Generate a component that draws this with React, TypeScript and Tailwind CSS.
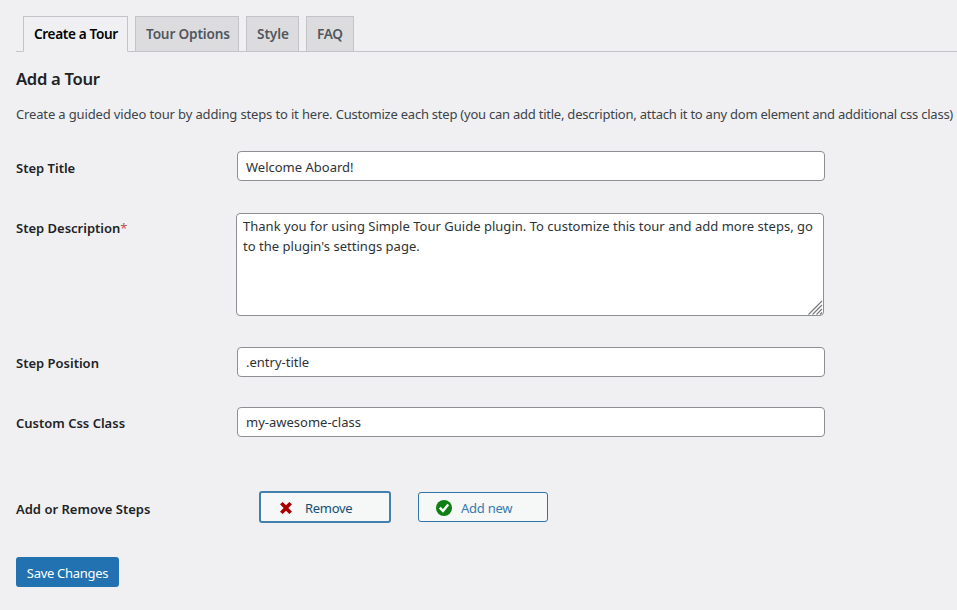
import React from "react";

const inputClass =
  "block h-[30px] w-[588px] rounded-[4px] border border-[#8c8f94] bg-white px-2 text-[13px] text-[#2c3338] outline-none";

function Tab({ label, active, className }: { label: string; active?: boolean; className: string }) {
  return (
    <a
      className={`box-border block h-[36px] whitespace-nowrap border border-[#c3c4c7] pl-[10px] pt-[5px] text-[13.6px] leading-6 font-semibold ${
        active ? "border-b-[#f0f0f2] bg-[#f0f0f2] text-black" : "bg-[#dcdcde] text-[#50575e]"
      } ${className}`}
    >
      {label}
    </a>
  );
}

function Label({ children, className = "" }: { children: React.ReactNode; className?: string }) {
  return (
    <label className={`block shrink-0 whitespace-nowrap text-[13px] leading-5 font-semibold text-[#1d2327] ${className}`}>
      {children}
    </label>
  );
}

export default function App() {
  return (
    <div className="h-[610px] w-[957px] overflow-hidden bg-[#f0f0f2] pt-4 font-['Noto_Sans','Open_Sans',sans-serif]">
      <nav className="ml-4 flex h-[36px] bg-[linear-gradient(#c3c4c7,#c3c4c7)] bg-[length:100%_1px] bg-bottom bg-no-repeat pl-[7px]">
        <Tab label="Create a Tour" active className="w-[105px] tracking-[-0.35px]" />
        <Tab label="Tour Options" className="ml-[7px] w-[104px] tracking-[-0.15px]" />
        <Tab label="Style" className="ml-[7px] w-[53px] tracking-[-0.1px]" />
        <Tab label="FAQ" className="ml-[7px] w-[48px] tracking-[-0.3px]" />
      </nav>

      <main className="pl-4">
        <h2 className="mt-[15px] text-[16.6px] leading-6 font-semibold tracking-[-0.3px] text-[#1d2327]">Add a Tour</h2>
        <p className="mt-[13px] whitespace-nowrap text-[13px] leading-5 text-[#3c434a]">
          <span className="tracking-[-0.145px]">Create a guided video tour by adding steps to it here. </span>
          <span className="tracking-[-0.233px]">
            Customize each step (you can add title, description, attach it to any dom element and additional css class)
          </span>
        </p>

        <form className="mt-[27px]" onSubmit={(e) => e.preventDefault()}>
          <div className="flex h-[62px]">
            <Label className="w-[221px] pt-[7px]">Step Title</Label>
            <input className={`${inputClass} pt-[2px]`} defaultValue="Welcome Aboard!" />
          </div>
          <div className="flex h-[134px]">
            <Label className="w-[220px] pt-[5px]">
              Step Description<span className="font-normal text-[#c0504d]">*</span>
            </Label>
            <div className="relative h-[103px] w-[588px]">
              <textarea
                className="block h-[103px] w-[588px] resize-none rounded-[4px] border border-[#8c8f94] bg-white px-[6px] py-[2px] text-[13px] leading-5 tracking-[0.02px] text-[#2c3338] outline-none"
                defaultValue={"Thank you for using Simple Tour Guide plugin. To customize this tour and add more steps, go\nto the plugin's settings page."}
              />
              <svg className="absolute right-[1px] bottom-[1px]" width="15" height="15" viewBox="0 0 15 15" fill="none" stroke="#77797c" strokeWidth="1.2">
                <path d="M0.5 14.5 14 1M4.5 14.5 14 5M8.5 14.5 14 9M12 14.5 14 12.5" />
              </svg>
            </div>
          </div>
          <div className="flex h-[60px]">
            <Label className="w-[221px] pt-[6px]">Step Position</Label>
            <input className={inputClass} defaultValue=".entry-title" />
          </div>
          <div className="flex h-[84px]">
            <Label className="w-[221px] pt-[6px]">Custom Css Class</Label>
            <input className={inputClass} defaultValue="my-awesome-class" />
          </div>
          <div className="flex h-[66px]">
            <Label className="w-[243px] pt-[8px]">Add or Remove Steps</Label>
            <button className="flex h-[32px] w-[132px] items-center rounded-[3px] border-2 border-[#4480ad] bg-[#f6f7f7] pt-[2px] pl-[19px] text-[13px] text-[#135074]">
              <svg width="12" height="12" viewBox="0 0 12 12" fill="#a80000">
                <path d="M2.7 0 6 3.3 9.3 0 12 2.2 8.4 6 12 9.8 9.3 12 6 8.7 2.7 12 0 9.8 3.6 6 0 2.2Z" />
              </svg>
              <span className="ml-[13px] pt-px tracking-[-0.3px]">Remove</span>
            </button>
            <button className="mt-px ml-[27px] flex h-[30px] w-[130px] items-center rounded-[3px] border border-[#2f74a9] bg-[#f6f7f7] pt-[2px] pl-[17px] text-[13px] text-[#347bb2]">
              <svg width="16" height="16" viewBox="0 0 16 16">
                <circle cx="8" cy="8" r="8" fill="#108014" />
                <path d="m3.8 7.6 3.2 3.4 5.2-6.4" fill="none" stroke="#fff" strokeWidth="2.4" />
              </svg>
              <span className="ml-[9px] pt-px tracking-[-0.25px]">Add new</span>
            </button>
          </div>
          <button className="block h-[30px] w-[103px] rounded-[3px] bg-[#2271b1] pt-[2px] text-[13px] leading-5 tracking-[-0.3px] text-white">
            Save Changes
          </button>
        </form>
      </main>
    </div>
  );
}
